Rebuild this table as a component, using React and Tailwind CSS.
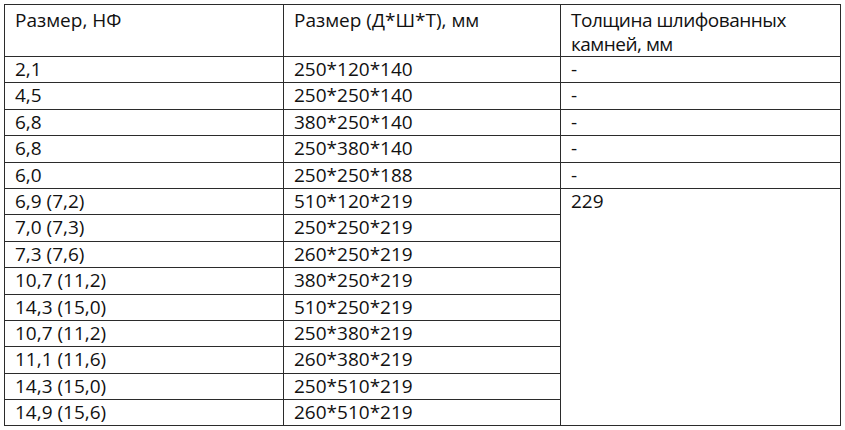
const rows = [
  ["2,1", "250*120*140", "-"],
  ["4,5", "250*250*140", "-"],
  ["6,8", "380*250*140", "-"],
  ["6,8", "250*380*140", "-"],
  ["6,0", "250*250*188", "-"],
  ["6,9 (7,2)", "510*120*219"],
  ["7,0 (7,3)", "250*250*219"],
  ["7,3 (7,6)", "260*250*219"],
  ["10,7 (11,2)", "380*250*219"],
  ["14,3 (15,0)", "510*250*219"],
  ["10,7 (11,2)", "250*380*219"],
  ["11,1 (11,6)", "260*380*219"],
  ["14,3 (15,0)", "250*510*219"],
  ["14,9 (15,6)", "260*510*219"],
];

export default function App() {
  const cell = "border-[1.5px] border-[#2b2b2b] px-[10px] align-top leading-[24px]";
  return (
    <div className="w-[845px] h-[430px] bg-white pt-[4px] pl-[4px]"
      style={{ fontFamily: '"Open Sans", "Liberation Sans", sans-serif' }}>
      <table className="border-collapse table-fixed w-[836px] text-[19px] text-[#111]">
        <colgroup>
          <col className="w-[279px]" />
          <col className="w-[277px]" />
          <col className="w-[280px]" />
        </colgroup>
        <tbody>
          <tr className="h-[52px]">
            <td className={cell + " pt-[3px]"}>Размер, НФ</td>
            <td className={cell + " pt-[3px]"}>Размер (Д*Ш*Т), мм</td>
            <td className={cell + " pt-[3px] tracking-[-0.5px]"}>Толщина шлифованных камней, мм</td>
          </tr>
          {rows.map((r, i) => (
            <tr key={i} className="h-[26.4px]">
              <td className={cell}>{r[0]}</td>
              <td className={cell}>{r[1]}</td>
              {i < 5 && <td className={cell}>{r[2]}</td>}
              {i === 5 && <td rowSpan={9} className={cell}>229</td>}
            </tr>
          ))}
        </tbody>
      </table>
    </div>
  );
}
